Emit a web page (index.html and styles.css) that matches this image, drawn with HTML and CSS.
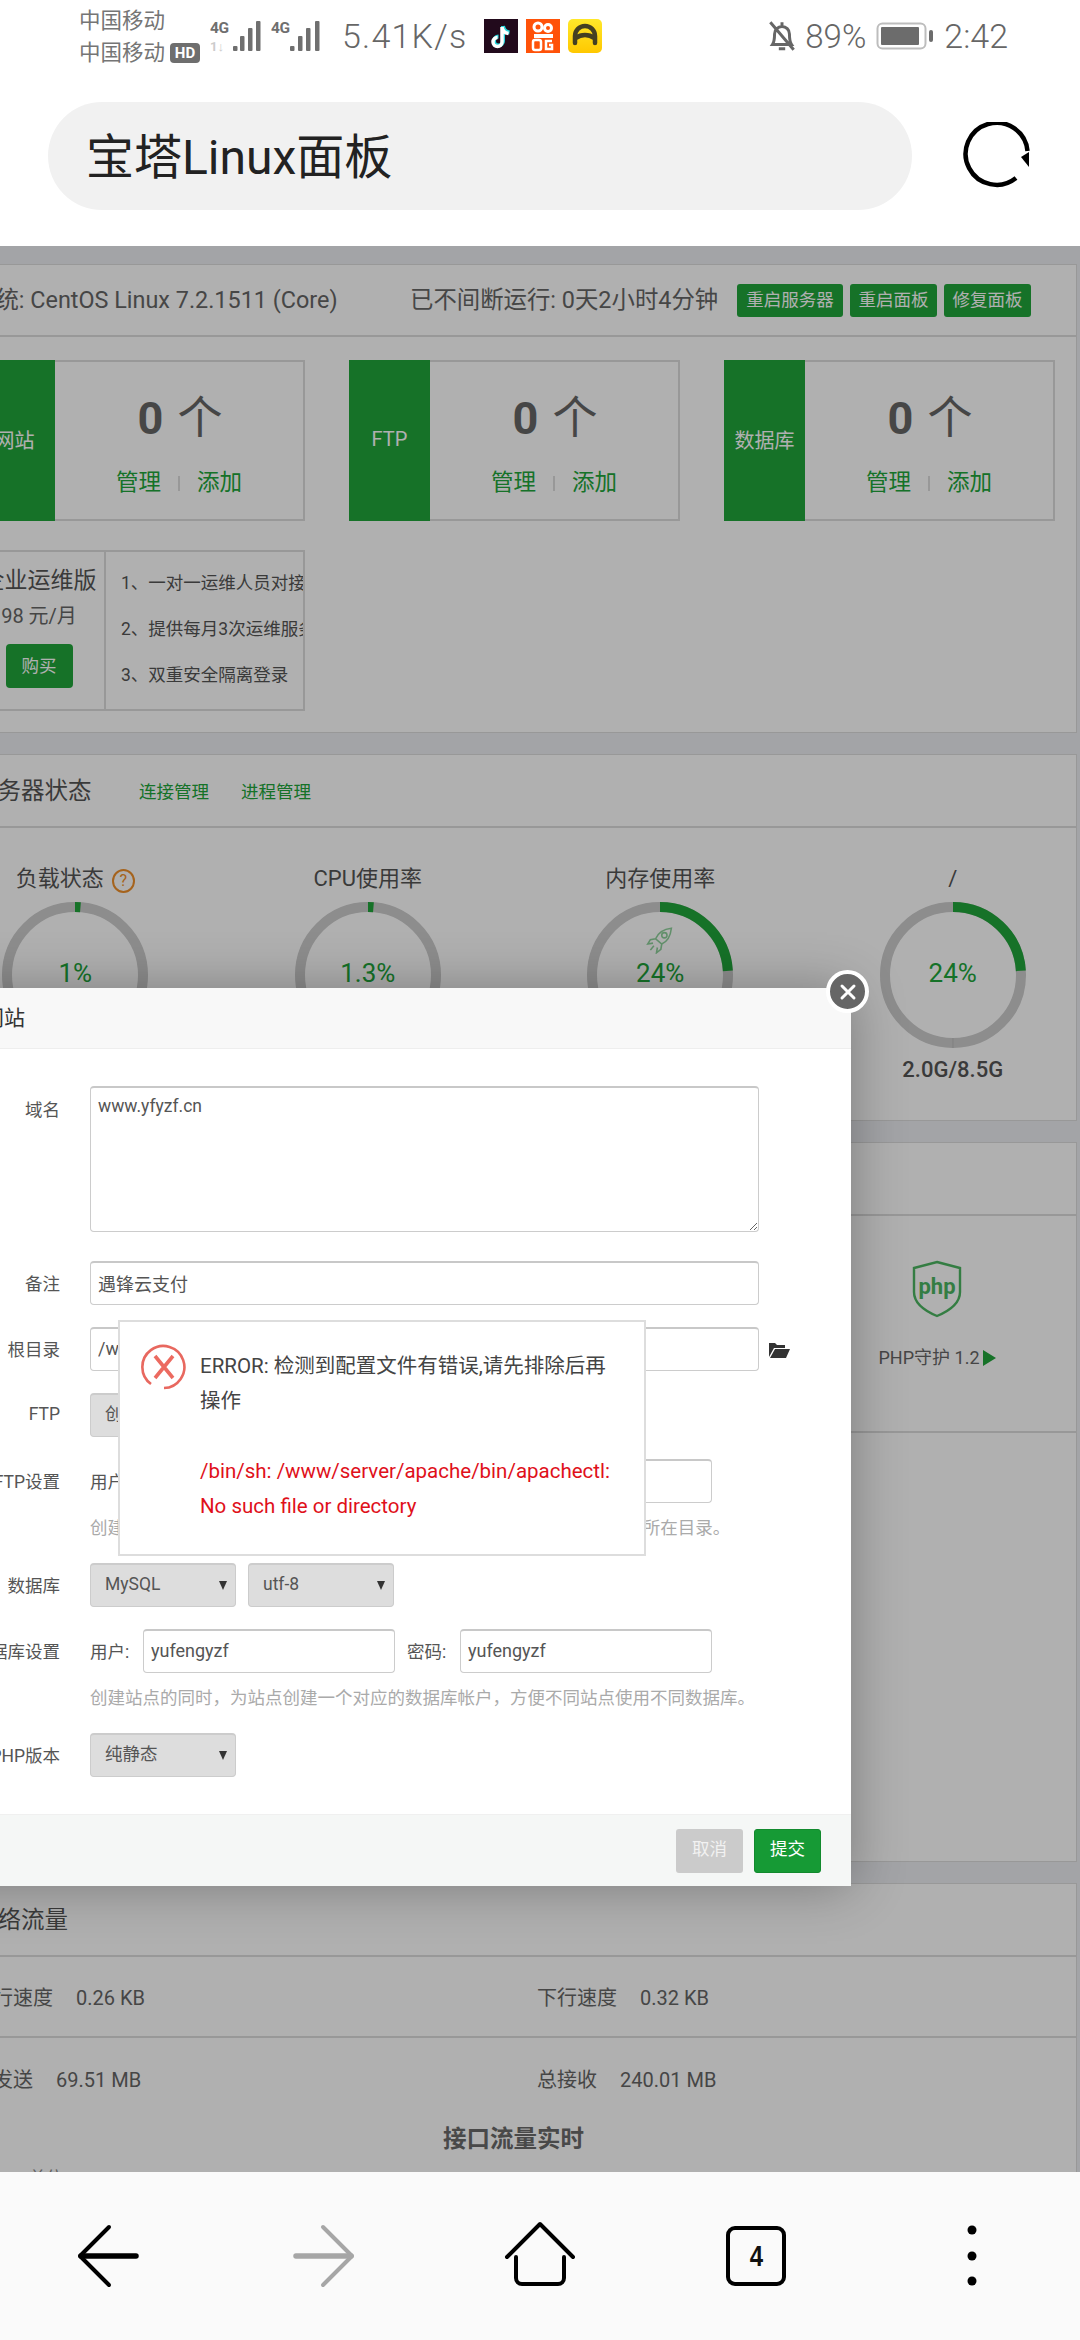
FILE: index.html
```html
<!DOCTYPE html>
<html lang="zh">
<head>
<meta charset="utf-8">
<title>宝塔Linux面板</title>
<link rel="stylesheet" href="styles.css">
</head>
<body>
<div class="screen">
  <div class="status">
    <div class="carriers">
      <div>中国移动</div>
      <div class="carrier2">中国移动<span class="hd">HD</span></div>
    </div>
    <svg class="sig" width="52" height="40" viewBox="0 0 52 40">
      <text class="sig-t" x="0" y="13">4G</text>
      <text class="sig-f" x="0" y="31">1↓</text>
      <rect class="bar" x="23" y="26" width="4.500" height="5" rx="1"/>
      <rect class="bar" x="30" y="16" width="4.500" height="15" rx="1"/>
      <rect class="bar" x="38" y="8" width="4.500" height="23" rx="1"/>
      <rect class="bar" x="46" y="1" width="4.500" height="30" rx="1"/>
    </svg>
    <svg class="sig sig2" width="52" height="40" viewBox="0 0 52 40">
      <text class="sig-t" x="0" y="13">4G</text>
      <rect class="bar" x="19" y="26" width="4.500" height="5" rx="1"/>
      <rect class="bar" x="27" y="16" width="4.500" height="15" rx="1"/>
      <rect class="bar" x="35" y="8" width="4.500" height="23" rx="1"/>
      <rect class="bar" x="44" y="1" width="4.500" height="30" rx="1"/>
    </svg>
    <div class="speed">5.41K/s</div>
    <svg class="app" width="34" height="34" viewBox="0 0 34 34">
      <rect width="34" height="34" fill="#220a1c"/>
      <path d="M19 7v15a4.500 4.500 0 1 1-4.500-4.500M19 7c.5 4 3 6 6.500 6.500" fill="none" stroke="#25d6dd" stroke-width="4"/>
      <path d="M18 8v15a4.500 4.500 0 1 1-4.500-4.500M18 8c.5 4 3 6 6.500 6.500" fill="none" stroke="#fff" stroke-width="3.500"/>
    </svg>
    <svg class="app" width="34" height="34" viewBox="0 0 34 34">
      <rect width="34" height="34" fill="#ff5209"/>
      <circle cx="12" cy="8" r="4" fill="none" stroke="#fff" stroke-width="3"/>
      <circle cx="22" cy="9" r="3.500" fill="none" stroke="#fff" stroke-width="3"/>
      <rect x="8" y="15" width="19" height="4" fill="#fff"/>
      <rect x="7" y="21" width="8" height="10" rx="2" fill="none" stroke="#fff" stroke-width="2.500"/>
      <path d="M26 22h-6v8h6v-4h-3" fill="none" stroke="#fff" stroke-width="2.500"/>
    </svg>
    <svg class="app" width="34" height="34" viewBox="0 0 34 34">
      <defs><linearGradient id="yl" x1="0" y1="0" x2="0" y2="1"><stop offset="0" stop-color="#ffe82a"/><stop offset="1" stop-color="#ffc800"/></linearGradient></defs>
      <rect width="34" height="34" rx="5" fill="url(#yl)"/>
      <path d="M7 24v-7a10 10 0 0 1 20 0v7M8 19c5-4 13-4 18 0" fill="none" stroke="#443f22" stroke-width="4.500" stroke-linecap="round"/>
    </svg>
    <div class="status-right">
      <svg class="bell" width="30" height="34" viewBox="0 0 28 32">
        <path d="M5 24c2-3 2-6 2-10a7 7 0 0 1 14 0c0 4 0 7 2 10zM11 28h6M14 3v3M3 3l22 26" fill="none" stroke="#666" stroke-width="2.800"/>
      </svg>
      <span class="pct">89%</span>
      <svg class="batt" width="60" height="28" viewBox="0 0 60 28">
        <rect x="1.500" y="1.500" width="48" height="25" rx="5" fill="none" stroke="#bdbdbd" stroke-width="2"/>
        <rect x="5" y="5" width="38" height="18" rx="1" fill="#6c6c6c"/>
        <rect x="53" y="8" width="4" height="12" rx="2" fill="#6c6c6c"/>
      </svg>
      <span class="time">2:42</span>
    </div>
  </div>

  <div class="header">
    <div class="pill">宝塔Linux面板</div>
    <svg class="reload" width="68" height="68" viewBox="0 0 68 68">
      <path d="M53 56A31 31 0 1 1 64.500 29" fill="none" stroke="#000" stroke-width="4.500"/>
      <path d="M66 30v15l-8-10z" fill="#000"/>
    </svg>
  </div>

  <main class="main">
    <div class="page">
      <section class="panel p1">
        <div class="sys-row">
          <span class="sys-name">系统: CentOS Linux 7.2.1511 (Core)</span>
          <span class="sys-up">已不间断运行: 0天2小时4分钟</span>
          <span class="btn-s btn-w5">重启服务器</span>
          <span class="btn-s">重启面板</span>
          <span class="btn-s">修复面板</span>
        </div>
        <div class="cards">
          <div class="card">
            <div class="card-tag">网站</div>
            <div class="card-body"><div class="count"><b>0</b> 个</div><div class="card-links"><a>管理</a><i></i><a>添加</a></div></div>
          </div>
          <div class="card">
            <div class="card-tag">FTP</div>
            <div class="card-body"><div class="count"><b>0</b> 个</div><div class="card-links"><a>管理</a><i></i><a>添加</a></div></div>
          </div>
          <div class="card">
            <div class="card-tag">数据库</div>
            <div class="card-body"><div class="count"><b>0</b> 个</div><div class="card-links"><a>管理</a><i></i><a>添加</a></div></div>
          </div>
        </div>
        <div class="promo">
          <div class="promo-l">
            <div class="promo-t">企业运维版</div>
            <div class="promo-p">98 元/月</div>
            <div class="promo-b">购买</div>
          </div>
          <div class="promo-r">
            <div>1、一对一运维人员对接</div>
            <div>2、提供每月3次运维服务</div>
            <div>3、双重安全隔离登录</div>
          </div>
        </div>
      </section>

      <section class="panel p2">
        <div class="p-head">
          <span class="p-title">服务器状态</span>
          <a class="p-link">连接管理</a>
          <a class="p-link">进程管理</a>
        </div>
        <div class="gauges">
          <div class="gauge">
            <div class="g-title">负载状态<span class="qm">?</span></div>
            <div class="g-ring">
              <svg width="146" height="146" viewBox="0 0 146 146"><circle class="ring-bg" cx="73" cy="73" r="68"/><circle class="ring-fg" cx="73" cy="73" r="68" pathLength="100" stroke-dasharray="1.300 98.700"/></svg>
              <span class="g-val">1%</span>
            </div>
          </div>
          <div class="gauge">
            <div class="g-title">CPU使用率</div>
            <div class="g-ring">
              <svg width="146" height="146" viewBox="0 0 146 146"><circle class="ring-bg" cx="73" cy="73" r="68"/><circle class="ring-fg" cx="73" cy="73" r="68" pathLength="100" stroke-dasharray="1.300 98.700"/></svg>
              <span class="g-val">1.3%</span>
            </div>
          </div>
          <div class="gauge">
            <div class="g-title">内存使用率</div>
            <div class="g-ring">
              <svg width="146" height="146" viewBox="0 0 146 146"><circle class="ring-bg" cx="73" cy="73" r="68"/><circle class="ring-fg" cx="73" cy="73" r="68" pathLength="100" stroke-dasharray="24 76"/></svg>
              <svg class="rocket" width="28" height="27" viewBox="0 0 32 30">
                <path d="M29 1c-9 1-15 5-18 12l7 6c7-3 10-9 11-18zM11 13l-6 1-3 5 6-1M18 19l-1 6-5 4 1-6M9 21l-4 5" fill="none" stroke="#20a53a" stroke-width="1.800"/>
                <circle cx="21" cy="9" r="3" fill="none" stroke="#20a53a" stroke-width="1.800"/>
              </svg>
              <span class="g-val">24%</span>
            </div>
          </div>
          <div class="gauge">
            <div class="g-title">/</div>
            <div class="g-ring">
              <svg width="146" height="146" viewBox="0 0 146 146"><circle class="ring-bg" cx="73" cy="73" r="68"/><circle class="ring-fg" cx="73" cy="73" r="68" pathLength="100" stroke-dasharray="24 76"/><line class="ring-seam" x1="73" y1="136" x2="73" y2="146"/></svg>
              <span class="g-val">24%</span>
            </div>
            <div class="g-size">2.0G/8.5G</div>
          </div>
        </div>
      </section>

      <section class="panel p3">
        <div class="p-head p3-head"></div>
        <div class="soft-row soft-first">
          <div class="soft">
            <svg class="soft-ico" width="52" height="58" viewBox="0 0 52 58">
              <path d="M26 2l23 6v24c0 11-11 19-23 24C14 51 3 43 3 32V8z" fill="none" stroke="#20a53a" stroke-width="2.400"/>
              <text class="php-t" x="26" y="34" text-anchor="middle">php</text>
            </svg>
            <div class="soft-name">PHP守护 1.2<span class="tri"></span></div>
          </div>
        </div>
        <div class="soft-row"></div>
      </section>

      <section class="panel p4">
        <div class="p-head"><span class="p-title">网络流量</span></div>
        <div class="net-row">
          <div class="net-l">上行速度<span class="net-v">0.26 KB</span></div>
          <div class="net-r">下行速度<span class="net-v">0.32 KB</span></div>
        </div>
        <div class="net-row">
          <div class="net-l">总发送<span class="net-v">69.51 MB</span></div>
          <div class="net-r">总接收<span class="net-v">240.01 MB</span></div>
        </div>
        <div class="chart-t">接口流量实时</div>
        <div class="chart-u">单位</div>
      </section>
    </div>

    <div class="shade"></div>

    <div class="modal">
      <div class="m-close"><svg width="20" height="20" viewBox="0 0 20 20"><path d="M4 4l12 12M16 4L4 16" stroke="#fff" stroke-width="3" stroke-linecap="round"/></svg></div>
      <div class="m-title">添加网站</div>
      <div class="m-body">
        <div class="row row-big">
          <label class="lbl">域名</label>
          <textarea class="ta">www.yfyzf.cn</textarea>
        </div>
        <div class="row">
          <label class="lbl">备注</label>
          <input class="inp inp-full" value="遇锋云支付">
        </div>
        <div class="row">
          <label class="lbl">根目录</label>
          <input class="inp inp-full" value="/www/wwwroot/www.yfyzf.cn">
          <svg class="folder" width="22" height="17" viewBox="0 0 22 17"><path d="M1 16V2h6l2 2h8v3H6L1 16zM7 8h15l-4 9H2z" fill="#333"/></svg>
        </div>
        <div class="row">
          <label class="lbl">FTP</label>
          <div class="sel">创建</div>
        </div>
        <div>
          <div class="row">
            <label class="lbl">FTP设置</label>
            <span class="sub">用户:</span>
            <input class="inp inp-half" value="">
            <span class="sub sub2">密码:</span>
            <input class="inp inp-half" value="">
          </div>
          <div class="hint">创建站点的同时，为站点创建一个对应FTP帐户，并且FTP目录指向站点所在目录。</div>
        </div>
        <div class="row">
          <label class="lbl">数据库</label>
          <div class="sel">MySQL</div>
          <div class="sel sel2">utf-8</div>
        </div>
        <div>
          <div class="row">
            <label class="lbl">数据库设置</label>
            <span class="sub">用户:</span>
            <input class="inp inp-half" value="yufengyzf">
            <span class="sub sub2">密码:</span>
            <input class="inp inp-half" value="yufengyzf">
          </div>
          <div class="hint">创建站点的同时，为站点创建一个对应的数据库帐户，方便不同站点使用不同数据库。</div>
        </div>
        <div class="row">
          <label class="lbl">PHP版本</label>
          <div class="sel">纯静态</div>
        </div>
      </div>
      <div class="m-foot">
        <span class="m-btn m-cancel">取消</span>
        <span class="m-btn m-ok">提交</span>
      </div>
    </div>

    <div class="alert">
      <svg class="alert-ico" width="46" height="46" viewBox="0 0 46 46">
        <path d="M10 40A21 21 0 1 1 23 44" fill="none" stroke="#e8685f" stroke-width="2.600"/>
        <path d="M14 12l18 22M32 12L14 34" stroke="#ec6a60" stroke-width="3.600"/>
      </svg>
      <div class="alert-txt">
        <p>ERROR: 检测到配置文件有错误,请先排除后再操作</p>
        <p class="alert-err">/bin/sh: /www/server/apache/bin/apachectl: No such file or directory</p>
      </div>
    </div>
  </main>

  <nav class="nav">
    <span class="nav-i"><svg width="80" height="80" viewBox="0 0 80 80"><path d="M41 11L12 40 41 69" fill="none" stroke="#000" stroke-width="4" stroke-linecap="round" stroke-linejoin="round" /><path d="M13 40h55" stroke="#000" stroke-width="5.500" stroke-linecap="round"/></svg></span>
    <span class="nav-i"><svg width="80" height="80" viewBox="0 0 80 80"><path d="M39 11L68 40 39 69" fill="none" stroke="#a6a6a6" stroke-width="4" stroke-linecap="round" stroke-linejoin="round"/><path d="M12 40h55" stroke="#a6a6a6" stroke-width="5.500" stroke-linecap="round"/></svg></span>
    <span class="nav-i"><svg width="80" height="80" viewBox="0 0 80 80"><path d="M7 41L40 8l33 33" fill="none" stroke="#000" stroke-width="4" stroke-linecap="round" stroke-linejoin="round"/><path d="M16 41v21a6 6 0 0 0 6 6h36a6 6 0 0 0 6-6V41" fill="none" stroke="#000" stroke-width="4" stroke-linecap="round"/></svg></span>
    <span class="nav-i"><span class="tab-box"><span class="tab-n">4</span></span></span>
    <span class="nav-i"><svg width="80" height="80" viewBox="0 0 80 80"><circle cx="40" cy="14" r="4.500"/><circle cx="40" cy="40" r="4.500"/><circle cx="40" cy="65" r="4.500"/></svg></span>
  </nav>
</div>
</body>
</html>
```

FILE: styles.css
```css
* { box-sizing: border-box; }
html, body { margin: 0; padding: 0; }
body {
  width: 1080px;
  height: 2340px;
  overflow: hidden;
  font-family: Roboto, "Noto Sans CJK SC", sans-serif;
  color: #666;
  background: #fff;
}
.screen { width: 1080px; height: 2340px; display: flex; flex-direction: column; overflow: hidden; }

/* status bar */
.status { height: 72px; flex: none; display: flex; align-items: center; padding-left: 79px; padding-right: 72px; position: relative; color: #757575; }
.carriers { width: 131px; font-size: 21.500px; line-height: 32px; margin-top: 0; flex: none; padding-top: 2px; }
.carrier2 { display: flex; align-items: center; }
.hd { display: inline-block; width: 30px; height: 20px; margin-left: 5px; background: #6e6e6e; color: #fff; border-radius: 4px; font-size: 15px; font-weight: 700; line-height: 20px; text-align: center; }
.sig { flex: none; align-self: flex-start; margin-top: 20px; }
.sig2 { margin-left: 9px; }
.sig-t { font: 700 15.500px Roboto, sans-serif; fill: #6f6f6f; letter-spacing: -.5px; }
.sig-f { font: 700 13px Roboto, sans-serif; fill: #ccc; }
.bar { fill: #6f6f6f; }
.speed { flex: none; width: 142px; margin-left: 19px; font-size: 34px; font-weight: 300; letter-spacing: 1.200px; color: #666; white-space: nowrap; }
.app { flex: none; margin-right: 8px; }
.status-right { margin-left: auto; display: flex; align-items: center; }
.bell { margin-right: 8px; }
.pct { font-size: 33px; font-weight: 300; width: 71px; color: #666; }
.batt { margin-right: 8px; }
.time { font-size: 34px; font-weight: 300; color: #666; }

/* browser header */
.header { height: 174px; flex: none; background: #fff; display: flex; padding: 30px 0 0 48px; }
.pill { width: 864px; height: 108px; border-radius: 54px; background: #f1f1f1; color: #222; font-size: 48px; line-height: 112px; padding-left: 38px; }
.reload { margin: 20px 0 0 51px; }

/* page */
.main { flex: 1; position: relative; overflow: hidden; background: #eceef2; }
.page { width: 1148px; margin-left: -71px; padding-top: 18px; }
.panel { background: #fff; border: 1px solid #ddd; border-left: 0; margin-bottom: 21px; }
.p1 { height: 469px; }
.p2 { height: 367px; }
.p3 { height: 720px; }
.p4 { height: 400px; margin-bottom: 0; border-bottom: 0; }

.sys-row { height: 72px; border-bottom: 2px solid #ddd; display: flex; align-items: center; padding-left: 43px; font-size: 23.400px; color: #666; white-space: nowrap; }
.sys-name { width: 438px; margin-bottom: 4px; }
.sys-up { width: 327px; margin-bottom: 4px; }
.btn-s { width: 87px; height: 33px; margin-right: 7px; border-radius: 3px; background: #20a53a; color: #fff; font-size: 17.500px; line-height: 33px; text-align: center; }
.btn-w5 { width: 106px; }

.cards { display: flex; padding: 23px 0 0 45px; gap: 44px; }
.card { width: 331px; height: 161px; border: 2px solid #ddd; border-left: 0; display: flex; }
.card-tag { width: 81px; margin-top: -2px; margin-bottom: -2px; padding-bottom: 3px; background: #20a53a; color: #fff; font-size: 20px; display: flex; align-items: center; justify-content: center; flex: none; }
.card-body { flex: 1; display: flex; flex-direction: column; align-items: center; }
.count { font-size: 45px; line-height: 60px; margin-top: 27px; padding-left: 2px; word-spacing: 3px; color: #666; }
.count b { font-weight: 700; }
.card-links { display: flex; align-items: center; margin-top: 18px; font-size: 22.500px; line-height: 30px; color: #20a53a; }
.card-links i { width: 2px; height: 15px; background: #ddd; margin: 3px 17px 0; }

.promo { display: flex; width: 331px; height: 161px; margin: 29px 0 0 45px; border: 2px solid #ddd; border-left: 0; overflow: hidden; }
.promo-l { width: 132px; flex: none; border-right: 2px solid #ddd; display: flex; flex-direction: column; align-items: center; white-space: nowrap; }
.promo-t { font-size: 23px; line-height: 30px; margin-top: 14px; color: #555; }
.promo-p { font-size: 20px; line-height: 28px; margin-top: 6px; color: #666; }
.promo-b { width: 67px; height: 44px; margin-top: 14px; background: #20a53a; color: #fff; border-radius: 4px; font-size: 17.500px; line-height: 44px; text-align: center; }
.promo-r { flex: 1; padding: 8px 0 0 15px; font-size: 17.500px; line-height: 46px; color: #555; white-space: nowrap; overflow: hidden; }

.p-head { height: 73px; border-bottom: 2px solid #ddd; display: flex; align-items: center; padding-left: 45px; flex: none; }
.p-title { font-size: 23.500px; color: #555; width: 165px; white-space: nowrap; margin-bottom: 3px; }
.p-link { font-size: 17.500px; color: #20a53a; margin-right: 32px; white-space: nowrap; margin-bottom: 1px; }

.gauges { display: grid; grid-template-columns: repeat(4, 292.500px); padding-top: 36px; }
.gauge { display: flex; flex-direction: column; align-items: center; }
.g-title { height: 30px; font-size: 22px; line-height: 30px; color: #555; white-space: nowrap; display: flex; align-items: center; }
.qm { width: 23px; height: 24px; margin: 3px 0 0 8px; border: 2px solid #f0902a; border-radius: 50%; color: #f0902a; font-size: 16px; line-height: 20px; text-align: center; }
.g-ring { position: relative; width: 146px; height: 146px; margin-top: 8px; }
.g-ring > svg:first-child { display: block; }
.ring-bg { fill: none; stroke: #cccccc; stroke-width: 10; }
.ring-fg { fill: none; stroke: #20a53a; stroke-width: 10; transform: rotate(-90deg); transform-origin: 73px 73px; }
.ring-seam { stroke: #bbb; stroke-width: 1; }
.g-val { position: absolute; left: 0; right: 0; top: 53px; line-height: 36px; text-align: center; font-size: 26px; color: #20a53a; }
.rocket { position: absolute; left: 59px; top: 25px; opacity: .5; }
.g-size { font-size: 22px; line-height: 30px; margin-top: 7px; color: #555; font-weight: 500; }

.p3-head { height: 73px; }
.soft-row { height: 214px; border-bottom: 2px solid #ddd; display: flex; justify-content: flex-end; }
.soft-row:last-child { border-bottom: 0; }
.soft-first { height: 217px; }
.soft { width: 278px; padding-top: 44px; display: flex; flex-direction: column; align-items: center; }
.soft-ico { opacity: .8; }
.php-t { font: 700 22px Roboto, sans-serif; fill: #20a53a; }
.soft-name { margin-top: 27px; font-size: 18px; line-height: 26px; color: #666; white-space: nowrap; display: flex; align-items: center; }
.tri { width: 0; height: 0; margin-left: 3px; border-left: 13px solid #20a53a; border-top: 8px solid transparent; border-bottom: 8px solid transparent; }

.net-row { height: 81px; border-bottom: 2px solid #ddd; display: flex; align-items: center; padding-left: 44px; font-size: 20px; color: #666; white-space: nowrap; }
.net-row + .net-row { border-bottom: 0; }
.net-l { width: 564px; flex: none; }
.net-v { margin-left: 23px; }
.chart-t { margin-top: 0; padding-left: 22px; text-align: center; font-size: 23.500px; font-weight: 700; line-height: 40px; color: #6a6a6a; }
.chart-u { padding-left: 100px; margin-top: 7px; font-size: 17px; line-height: 24px; color: #888; }

.shade { position: absolute; inset: 0; background: rgba(0, 0, 0, .31); }

/* modal */
.modal { position: absolute; left: -80px; top: 742px; width: 931px; height: 898px; background: #fff; box-shadow: 1px 1px 50px rgba(0, 0, 0, .3); display: flex; flex-direction: column; }
.m-close { position: absolute; right: -18px; top: -18px; width: 43px; height: 43px; border-radius: 50%; background: #666; border: 4px solid #fff; display: flex; align-items: center; justify-content: center; }
.m-title { height: 61px; flex: none; background: #f8f8f8; border-bottom: 1px solid #eee; padding-left: 21px; font-size: 21px; line-height: 60px; color: #333; }
.m-body { flex: 1; display: flex; flex-direction: column; gap: 22px; padding-top: 37px; }
.row { display: flex; align-items: center; height: 44px; }
.row-big { height: 146px; align-items: flex-start; margin-bottom: 7px; }
.lbl { width: 140px; flex: none; margin-right: 30px; padding-bottom: 2px; text-align: right; font-size: 17.500px; color: #555; white-space: nowrap; }
.row-big .lbl { padding-top: 10px; }
.inp, .ta { border: 1px solid #ccc; border-top: 2px solid #c8c8c8; border-radius: 4px; background: #fff; color: #555; font: 17.500px Roboto, "Noto Sans CJK SC", sans-serif; padding: 0 7px; outline: 0; }
.inp { height: 44px; font-size: 18px; padding-bottom: 2px; }
.ta { width: 669px; height: 146px; padding-top: 8px; margin: 0; display: block; }
.inp-full { width: 669px; }
.inp-half { width: 252px; }
.sub { width: 53px; flex: none; font-size: 17.500px; color: #555; white-space: nowrap; padding-bottom: 2px; }
.sub2 { width: 53px; margin-left: 12px; }
.folder { margin-left: 9px; }
.sel { width: 146px; height: 44px; flex: none; position: relative; background: #ddd; border: 1px solid #ccc; border-top: 2px solid #ccc; border-radius: 4px; padding-left: 14px; font-size: 17.500px; line-height: 38px; color: #555; }
.sel::after { content: ""; position: absolute; right: 8px; top: 16px; border-top: 9px solid #333; border-left: 4px solid transparent; border-right: 4px solid transparent; }
.sel2 { margin-left: 12px; }
.hint { height: 38px; padding: 14px 0 0 170px; font-size: 17.500px; line-height: 22px; color: #aaa; white-space: nowrap; }
.m-foot { height: 72px; flex: none; background: #f5f7f6; border-top: 1px solid #f0f0f0; display: flex; justify-content: flex-end; align-items: center; gap: 11px; padding-right: 30px; }
.m-btn { width: 67px; height: 44px; border-radius: 3px; font-size: 17.500px; line-height: 41px; text-align: center; color: #fff; }
.m-cancel { background: #cbcbcb; color: #f2f2f2; }
.m-ok { background: #169a35; border: 1px solid #128a2e; line-height: 39px; }

/* error layer */
.alert { position: absolute; left: 118px; top: 1074px; width: 528px; height: 236px; background: #fff; border: 2px solid #ddd; display: flex; padding: 22px 30px 0 21px; }
.alert-ico { flex: none; margin-right: 13px; }
.alert-txt { font-size: 20.500px; line-height: 35px; color: #444; flex: 1; margin-top: 5px; min-width: 0; margin-right: -12px; }
.alert-txt p { margin: 0 0 35px; }
.alert-err { color: #e0101a; }

/* bottom nav */
.nav { height: 168px; flex: none; background: #fafafa; display: flex; position: relative; }
.nav-i { width: 216px; display: flex; align-items: center; justify-content: center; }
.tab-box { width: 60px; height: 60px; border: 4.500px solid #000; border-radius: 9px; display: flex; align-items: center; justify-content: center; }
.tab-n { display: block; font: 700 30px "Liberation Sans", sans-serif; color: #111; transform: scaleX(.8); }
```
